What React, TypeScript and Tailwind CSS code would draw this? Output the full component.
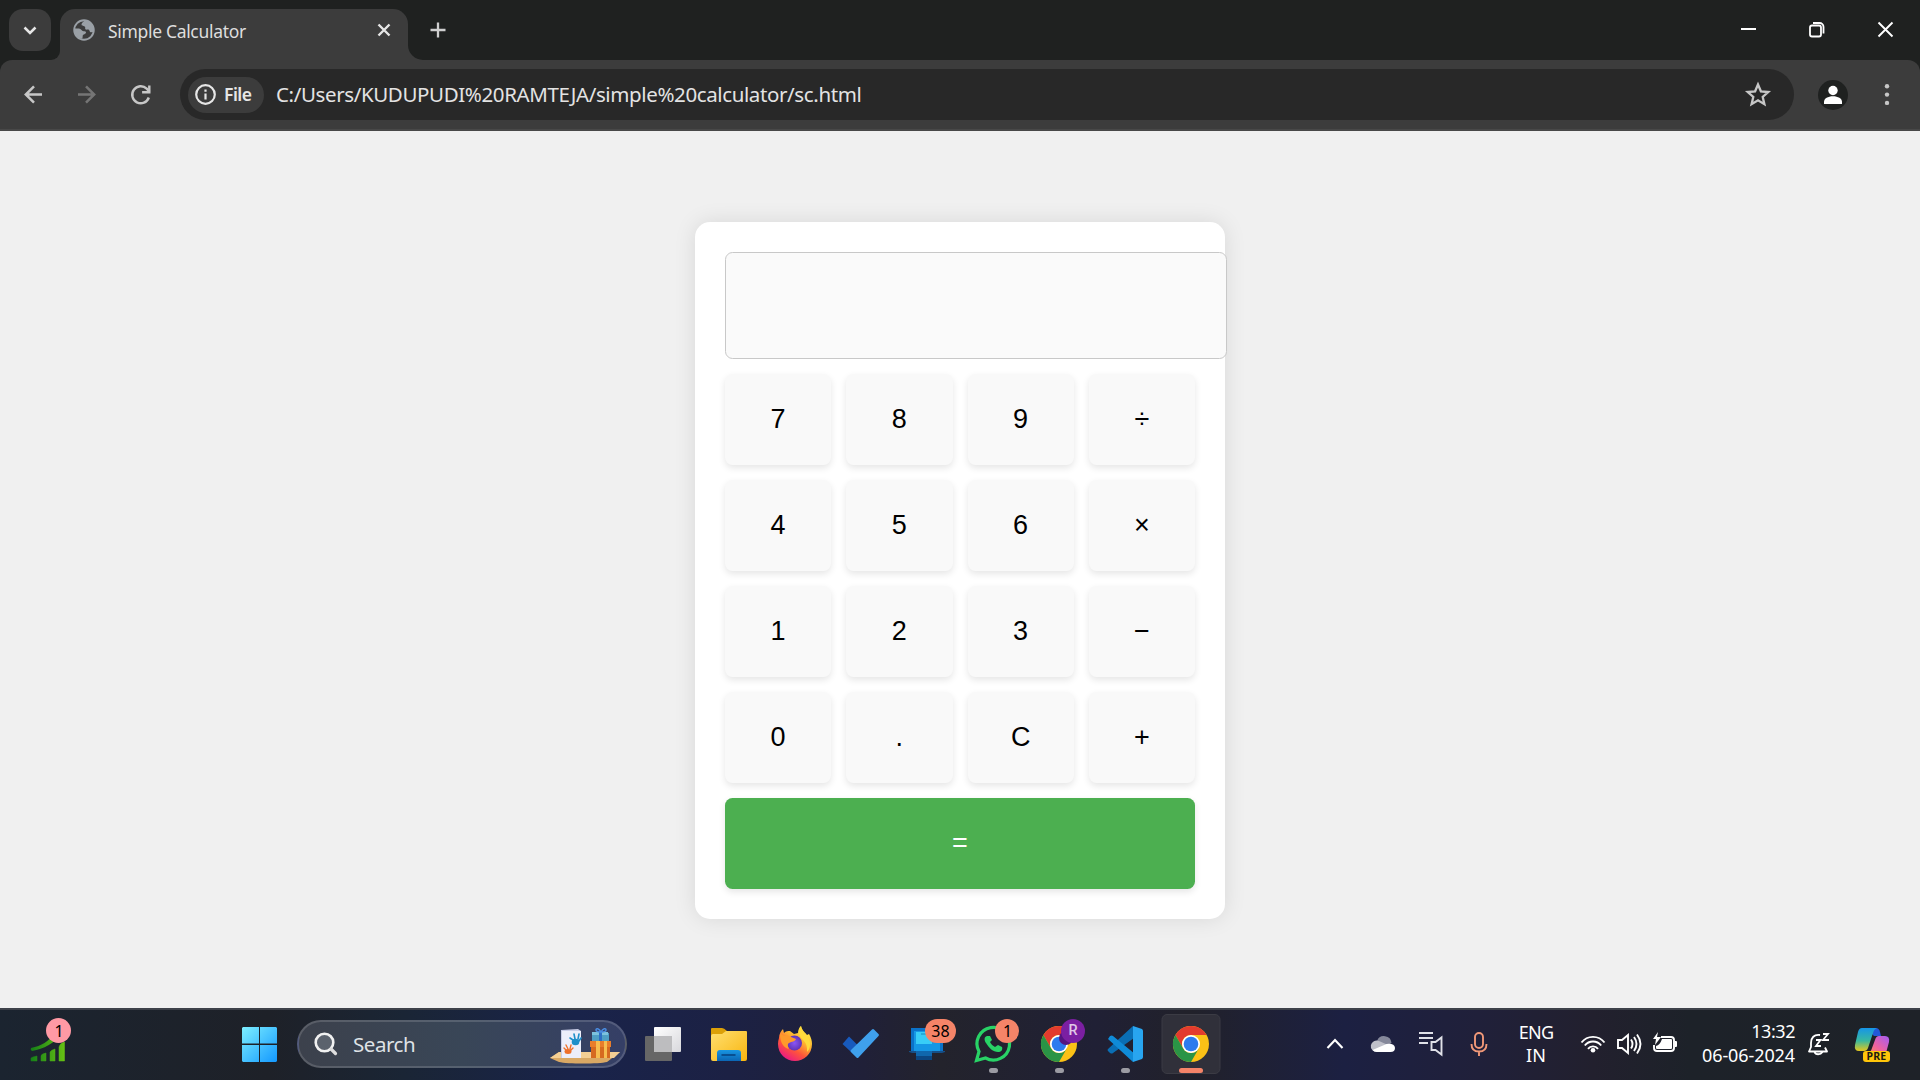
import type { ReactNode } from "react";

function Glyph({ x, y = 1008, w, h = 72, children }: { x: number; y?: number; w: number; h?: number; children: ReactNode }) {
  return (
    <svg className="block shrink-0" width={w} height={h} viewBox={`${x} ${y} ${w} ${h}`} fill="none">
      {children}
    </svg>
  );
}

function TabStrip() {
  return (
    <div className="flex h-[60px] items-start bg-[#1f2120]">
      <button className="mt-[9px] ml-[9px] h-[42px] w-[42px] rounded-[14px] bg-[#3c3c3c]">
        <Glyph x={9} y={9} w={42} h={42}>
          <path d="M24.5 27.5 30 33l5.5-5.5" stroke="#e6e6e6" strokeWidth="2.5" />
        </Glyph>
      </button>
      <div className="mt-[45px] h-[15px] w-[9px] bg-[#3c3c3c]">
        <div className="h-full w-full rounded-br-[15px] bg-[#1f2120]" />
      </div>
      <div className="mt-[9px] flex h-[51px] w-[348px] items-start rounded-t-[15px] bg-[#3c3c3c] pl-3">
        <Glyph x={72} y={9} w={24} h={42}>
          <circle cx="84" cy="30" r="9.800" stroke="#9aa0a6" strokeWidth="1.900" />
          <path d="M74.500 28.500h4.500c2 0 2.500 2.500 4.500 2.800 1.500.2 2.500-.2 2.500 1.200 0 1.700-3 1.600-3.300 3.300-.2 1.200.3 2.700-1.200 3C77.500 38.500 74 34 74.500 28.500Z" fill="#9aa0a6" />
          <path d="M85 20.500c-2 1.500-3.500 2.500-3.500 4 0 1.700 2.800 1.200 3.500 2.300.6 1-.4 2.200.8 2.700 1 .5 2-.4 3 .2 1.200.7.6 2.300 2 2.600l3-.3C94.500 25.500 90.500 20.500 85 20.500Z" fill="#9aa0a6" />
        </Glyph>
        <span className="ml-3 h-[42px] w-[262px] font-['Noto_Sans'] text-[17.500px] leading-[45px] tracking-[-0.320px] whitespace-nowrap text-[#dedede]">Simple Calculator</span>
        <Glyph x={370} y={9} w={28} h={42}>
          <path d="m378.500 24.500 11 11m0-11-11 11" stroke="#e6e6e6" strokeWidth="2.400" />
        </Glyph>
      </div>
      <div className="mt-[45px] h-[15px] w-[15px] bg-[#3c3c3c]">
        <div className="h-full w-full rounded-bl-[15px] bg-[#1f2120]" />
      </div>
      <Glyph x={423} y={0} w={30} h={60}>
        <path d="M430.500 30h15M438 22.500v15" stroke="#cfcfcf" strokeWidth="2.300" />
      </Glyph>
      <div className="flex-1" />
      <Glyph x={1720} y={0} w={200} h={60}>
        <path d="M1741 29h15" stroke="#fff" strokeWidth="2" />
        <rect x="1810" y="25.500" width="11" height="11" rx="2" stroke="#fff" strokeWidth="1.800" />
        <path d="M1813 23h6.500a4 4 0 0 1 4 4v6.500" stroke="#fff" strokeWidth="1.800" />
        <path d="m1878.500 22.500 14 14m0-14-14 14" stroke="#fff" strokeWidth="1.900" />
      </Glyph>
    </div>
  );
}

function Toolbar() {
  return (
    <div className="bg-[#1f2120]">
      <div className="flex h-[71px] items-start rounded-t-[12px] bg-[#3c3c3c] pt-[9px] shadow-[inset_0_-2px_0_#484848]">
        <Glyph x={0} y={69} w={180} h={51}>
          <path d="M42 94.500H26m8-8.200-8.200 8.200 8.200 8.200" stroke="#c7c7c7" strokeWidth="2.500" />
          <path d="M78 94.500h16m-8-8.200 8.200 8.200-8.200 8.200" stroke="#757575" strokeWidth="2.500" />
          <path d="M148.800 97.500a8.500 8.500 0 1 1-2.100-8.800l2.800 3" stroke="#c7c7c7" strokeWidth="2.400" />
          <path d="M149.300 85.500v6.800h-7.200" stroke="#c7c7c7" strokeWidth="2.400" />
        </Glyph>
        <div className="flex h-[51px] w-[1614px] items-center rounded-full bg-[#282828] pl-2">
          <div className="flex h-9 w-[76px] items-center rounded-full bg-[#3c3c3c] pl-[6px]">
            <Glyph x={194} y={83} w={24} h={24}>
              <circle cx="205.500" cy="94.500" r="9.300" stroke="#e6e6e6" strokeWidth="2.200" />
              <path d="M205.500 93.500v6M205.500 89.500v2.200" stroke="#e6e6e6" strokeWidth="2.200" />
            </Glyph>
            <span className="ml-[6px] font-['Noto_Sans'] text-[17.500px] font-semibold tracking-[-0.500px] text-[#e6e6e6]">File</span>
          </div>
          <span className="ml-3 flex-1 font-['Noto_Sans'] text-[20.500px] tracking-[-0.380px] whitespace-nowrap text-[#e3e3e3]">
            C:/Users/KUDUPUDI%20RAMTEJA/simple%20calculator/sc.html
          </span>
          <Glyph x={1740} y={69} w={54} h={51}>
            <path d="m1758 84.500 2.900 6.800 7.400.7-5.600 4.900 1.700 7.300-6.400-3.900-6.400 3.900 1.700-7.300-5.600-4.900 7.400-.7z" stroke="#c7c7c7" strokeWidth="2.300" />
          </Glyph>
        </div>
        <Glyph x={1794} y={69} w={126} h={51}>
          <circle cx="1833" cy="95" r="15" fill="#1f2120" />
          <circle cx="1833" cy="90.500" r="4.700" fill="#fff" />
          <path d="M1824 104v-2c0-3.500 4-5.700 9-5.700s9 2.200 9 5.700v2z" fill="#fff" />
          <circle cx="1887" cy="86.300" r="2.200" fill="#c7c7c7" />
          <circle cx="1887" cy="94.600" r="2.200" fill="#c7c7c7" />
          <circle cx="1887" cy="102.900" r="2.200" fill="#c7c7c7" />
        </Glyph>
      </div>
    </div>
  );
}

const keys = ["7", "8", "9", "÷", "4", "5", "6", "×", "1", "2", "3", "−", "0", ".", "C", "+"];

function Calculator() {
  return (
    <div className="h-[697px] w-[530px] rounded-[15px] bg-white p-[30px] font-['Liberation_Sans',sans-serif] text-[27px] text-black shadow-[0_0_22.500px_rgba(0,0,0,0.1)]">
      <div className="mb-[15px] h-[107px] w-[501.500px] rounded-[7.500px] border border-[#c8c8c8] bg-[#fafafa]" />
      <div className="grid grid-cols-4 gap-[15px]">
        {keys.map((k) => (
          <button key={k} className="h-[91px] rounded-[7.500px] bg-[#f9f9f9] pb-px shadow-[0_3px_7.500px_rgba(0,0,0,0.1)]">
            {k}
          </button>
        ))}
        <button className="col-span-4 h-[91px] rounded-[7.500px] bg-[#4caf50] pb-px text-white shadow-[0_3px_7.500px_rgba(0,0,0,0.1)]">=</button>
      </div>
    </div>
  );
}

function ChromeLogo({ cx, cy = 1044 }: { cx: number; cy?: number }) {
  return (
    <g transform={`translate(${cx} ${cy})`}>
      <circle r="18" fill="#fbc116" />
      <path d="M-15.600-9A18 18 0 0 1 15.600-9H0A9 9 0 0 0-7.800 4.500Z" fill="#e33b2e" />
      <path d="M-15.600-9A18 18 0 0 0 0 18L7.800 4.500A9 9 0 0 1-7.800 4.500Z" fill="#2a9446" />
      <circle r="9" fill="#fff" />
      <circle r="7.300" fill="#2d7bee" />
    </g>
  );
}

function Taskbar() {
  return (
    <div className="flex h-[72px] items-start border-t-2 border-[#3d4149] bg-[linear-gradient(90deg,#1b2430_0%,#1e2128_14%,#1a2535_21%,#19234a_30%,#1c2144_38%,#202038_45%,#23232c_49%,#202035_57%,#21212a_62%,#1c2042_70%,#20203a_77%,#22202e_83%,#1d2229_88%,#1e2228_100%)] font-['Noto_Sans']">
      <div className="relative h-[70px] w-[230px]">
        <Glyph x={0} y={1010} w={230} h={70}>
          <defs>
            <linearGradient id="grow" x1="31" x2="66" y1="0" y2="0" gradientUnits="userSpaceOnUse">
              <stop stopColor="#168018" />
              <stop offset="1" stopColor="#6ac413" />
            </linearGradient>
          </defs>
          <path d="M31 1048c11-2 17-7 24-14l6 1c-7 8-17 14-29 16q-2-1-1-3z" fill="url(#grow)" />
          <path d="M31 1061v-3l2-1 4-1v5zM41 1061v-5q0-2 5-3v8zM50 1061v-9q1-2 5-3v12zM59 1061v-14q1-4 5.500-5v19z" fill="url(#grow)" stroke="url(#grow)" strokeWidth=".5" />
        </Glyph>
        <div className="absolute top-[8px] left-[46px] flex h-[25px] w-[25px] items-center justify-center rounded-full bg-[#ff99a4] pl-px text-[16px] text-black">1</div>
      </div>
      <Glyph x={230} y={1010} w={67} h={70}>
        <defs>
          <linearGradient id="win" x1="242" x2="277" y1="1027" y2="1062" gradientUnits="userSpaceOnUse">
            <stop stopColor="#7defff" />
            <stop offset="1" stopColor="#1398ff" />
          </linearGradient>
        </defs>
        <path d="M243 1027h16v16.500h-17V1028zM260 1027h16l1 1v15.500h-17zM242 1045h17v17h-16l-1-1zM260 1045h17v16l-1 1h-16z" fill="url(#win)" />
      </Glyph>
      <div className="mt-[10px] flex h-12 w-[330px] items-center rounded-full border-2 border-white/15 bg-[#3b4455] bg-[linear-gradient(90deg,#3c414c,#394657_50%,#353f66)]">
        <Glyph x={299} y={1020} w={52} h={48}>
          <circle cx="324.500" cy="1042.500" r="8.800" fill="#5b626d" stroke="#f1f1f1" strokeWidth="2.600" />
          <path d="m331 1049 4.500 4.500" stroke="#dedede" strokeWidth="3.200" strokeLinecap="round" />
        </Glyph>
        <span className="ml-[2px] w-[192px] text-[20.500px] tracking-[-0.450px] text-[#dfe2e6]">Search</span>
        <Glyph x={546} y={1022} w={80} h={44}>
          <path d="m551 1058 9-6h61l-13 10c-8 2-40 2-48 0z" fill="#d9a864" />
          <path d="m551 1058 9-6h61l-6 6z" fill="#f4cf94" />
          <path d="m562 1030 17-1 3 2v27h-20z" fill="#c9cde6" />
          <path d="M563 1031h19v27h-19z" fill="#eceefa" />
          <path d="m571 1038 3 2m1-6 1 5m4-5-1 5m3-1-2 3" stroke="#1e8fc9" strokeWidth="1.600" strokeLinecap="round" />
          <ellipse cx="576.500" cy="1042" rx="3.800" ry="3.200" fill="#1e8fc9" />
          <path d="m565 1048 2 2m0-5 2 4m3-4-1 4m3-1-3 3" stroke="#ef702a" strokeWidth="1.400" strokeLinecap="round" />
          <ellipse cx="569" cy="1051.500" rx="3.500" ry="2.500" fill="#ef702a" />
          <path d="M593 1033h17v8h-17z" fill="#4f9fc4" />
          <path d="M593 1032h16v3h-16z" fill="#7cc2dd" />
          <path d="M600 1031h3v10h-3z" fill="#2d6fc5" />
          <path d="M602 1032c-2-4-5-4-5-2s3 2 5 2 5 0 5-2-3-2-5 2z" stroke="#498be0" strokeWidth="1.500" />
          <path d="M592 1043h19v15h-19z" fill="#d66a20" />
          <path d="M591 1041h21v6h-21z" fill="#e87d2b" />
          <path d="M597 1041h4v17h-4zM605 1041h3v17h-3z" fill="#f6bd50" />
        </Glyph>
      </div>
      <Glyph x={627} y={1010} w={69} h={70}>
        <defs>
          <linearGradient id="tv" x1="0" x2="1" y1="0" y2="1">
            <stop stopColor="#fff" />
            <stop offset="1" stopColor="#d8d8dc" />
          </linearGradient>
        </defs>
        <rect x="645" y="1036" width="27" height="25" rx="1" fill="#666" />
        <rect x="654" y="1027" width="27" height="25" rx="1" fill="url(#tv)" />
        <path d="M654 1036h18v16h-18z" fill="#bdbdbf" />
      </Glyph>
      <Glyph x={696} y={1010} w={66} h={70}>
        <defs>
          <linearGradient id="folder" x1="0" x2="1" y1="0" y2="1">
            <stop stopColor="#ffdf70" />
            <stop offset="1" stopColor="#f9b50e" />
          </linearGradient>
          <linearGradient id="clip" x1="0" x2="0" y1="0" y2="1">
            <stop stopColor="#1896e2" />
            <stop offset="1" stopColor="#0b65b4" />
          </linearGradient>
        </defs>
        <path d="M711 1029q0-1 1-1h10q2 0 5 3h5v10h-21z" fill="#dca008" />
        <path d="M711 1036q0-2 2-2h9l4-3h20q1 0 1 1v27q0 2-2 2h-32q-2 0-2-2z" fill="url(#folder)" />
        <path d="M717 1061v-8q0-3 3-3h18q3 0 3 3v8z" fill="url(#clip)" />
        <path d="M721.500 1055h14" stroke="#084f91" strokeWidth="2" />
      </Glyph>
      <Glyph x={762} y={1010} w={66} h={70}>
        <defs>
          <linearGradient id="fox" x1="806" x2="785" y1="1028" y2="1060" gradientUnits="userSpaceOnUse">
            <stop stopColor="#fff14a" />
            <stop offset=".35" stopColor="#ffb52e" />
            <stop offset=".65" stopColor="#ff553a" />
            <stop offset="1" stopColor="#e8138c" />
          </linearGradient>
          <radialGradient id="foxGlobe">
            <stop stopColor="#8a55f5" />
            <stop offset="1" stopColor="#6034b5" />
          </radialGradient>
        </defs>
        <path d="M779 1038c0-4 2-7 4-9l1 4c2-2 4-2 6-2l4 3 4-1c0-3 1-5 3-7 1 5 4 6 6 9l2-1c2 3 3 7 3 10 0 10-8 17-17 17s-17-7-17-17q0-3 1-6z" fill="url(#fox)" />
        <circle cx="794.500" cy="1043" r="7.500" fill="url(#foxGlobe)" />
        <path d="M780 1034c2 0 3 1 4 2 3-1 5 0 7 1l5 2c-1 3-4 2-7 4-2 1-1 4 0 6-5-1-9-6-9-15z" fill="#ff9a2b" />
        <path d="M801 1026c1 5 4 7 7 11 3 5 3 11-1 15 1-10-5-12-7-16-2-4-1-8 1-10z" fill="#ffda3c" />
      </Glyph>
      <Glyph x={828} y={1010} w={66} h={70}>
        <path d="m842.500 1044 6.500-7.500 14 14-6 7z" fill="#185abd" />
        <path d="M872 1029.500q1-1 2 0l4.500 4.500q1 1 0 2l-20 21.500q-1 1-2 0l-5.500-5.500q-1-1 0-2z" fill="#3fa0ec" />
      </Glyph>
      <div className="relative h-[70px] w-[66px]">
        <Glyph x={894} y={1010} w={66} h={70}>
          <path d="M911 1028h32v23h-32z" fill="#0b72c8" />
          <path d="M914 1031h26v20h-26z" fill="#1597e5" />
          <path d="M909 1051h36v1l-3 1h-30l-3-1z" fill="#164f87" />
          <path d="M916 1032h16v28h-16z" fill="#1597e5" />
          <path d="M916 1032h16v12h-16z" fill="#38cdf7" />
          <path d="M916 1051h16v5h-16z" fill="#1067ad" />
          <path d="M916 1056h16v4h-16z" fill="#0b4682" />
          <path d="M921 1034h8" stroke="#168ac0" />
        </Glyph>
        <div className="absolute top-[9px] left-[31px] flex h-6 w-[31px] items-center justify-center rounded-full bg-[#f58468] text-[16px] text-black">38</div>
      </div>
      <div className="relative h-[70px] w-[66px]">
        <Glyph x={960} y={1010} w={66} h={70}>
          <path d="m976.500 1060.500 2.500-9a16.300 16.300 0 1 1 6.500 6.500z" stroke="#28d366" strokeWidth="3.200" />
          <path d="M987 1036c-3 1-3 4-1 7 3 5 7 9 12 9 3 0 5-2 4-5l-4-2-3 2c-2-1-4-3-5-5l2-2-2-4z" fill="#28d366" />
          <rect x="989" y="1068" width="9" height="5" rx="2.500" fill="#9b9ba3" />
        </Glyph>
        <div className="absolute top-[9px] left-[35px] flex h-6 w-6 items-center justify-center rounded-full bg-[#f58468] pl-px text-[16px] text-black">1</div>
      </div>
      <div className="relative h-[70px] w-[66px]">
        <Glyph x={1026} y={1010} w={66} h={70}>
          <ChromeLogo cx={1059} />
          <circle cx="1066" cy="1038" r="7" fill="#541580" />
          <rect x="1055" y="1068" width="9" height="5" rx="2.500" fill="#9b9ba3" />
        </Glyph>
        <div className="absolute top-[9px] left-[35px] flex h-6 w-6 items-center justify-center rounded-full bg-[#7b1fa2] font-['Roboto'] text-[14.500px] font-medium text-[#e0c8e8]">R</div>
      </div>
      <Glyph x={1092} y={1010} w={66} h={70}>
        <path d="m1108 1049 25-23 1 12-21 15q-1 1-3 0l-2-2q-1-1 0-2z" fill="#0a6eb4" />
        <path d="m1108 1039 2-3q2-1 3 0l22 18-2 8z" fill="#0f8bd8" />
        <path d="m1133 1026 9 3q1 1 1 2v26q0 1-1 2l-9 3z" fill="#28a5f0" />
        <rect x="1121" y="1068" width="9" height="5" rx="2.500" fill="#9b9ba3" />
      </Glyph>
      <Glyph x={1158} y={1010} w={66} h={70}>
        <rect x="1162" y="1014.500" width="58" height="59" rx="5" fill="#30303a" stroke="#3b3b44" />
        <ChromeLogo cx={1191} />
        <rect x="1179" y="1068" width="24" height="5" rx="2.500" fill="#f58468" />
      </Glyph>
      <div className="flex-1" />
      <Glyph x={1310} y={1010} w={190} h={70}>
        <path d="m1327.500 1048 7.500-8 7.500 8" stroke="#fff" strokeWidth="2.100" />
        <path d="M1377 1041a7.500 7.500 0 0 1 14.500 2l-8 5z" fill="#85889a" />
        <path d="M1377 1052a6 5.700 0 1 1 2-11l9 4-6 7z" fill="#bfc0ca" />
        <path d="m1372.500 1050 14-6q8-1 8.500 4 0 4-4.500 4h-13.500q-3 0-4.500-2z" fill="#fff" />
        <path d="M1419 1033h14M1419 1038h14M1419 1043h9" stroke="#e0e1e8" strokeWidth="2" />
        <path d="M1431.500 1042h4l6-4.500v17l-6-4.500h-4z" stroke="#e0e1e8" strokeWidth="1.900" />
        <rect x="1475" y="1033" width="8" height="15" rx="4" stroke="#f09878" strokeWidth="1.900" />
        <path d="M1471.500 1044c0 5 3 7.500 7.500 7.500s7.500-2.500 7.500-7.500M1479 1051.500v4.500" stroke="#f09878" strokeWidth="1.900" />
      </Glyph>
      <div className="mt-[11px] flex w-[72px] flex-col items-center text-[18px] leading-[23px] text-white">
        <span className="tracking-[-0.700px]">ENG</span>
        <span>IN</span>
      </div>
      <Glyph x={1572} y={1010} w={112} h={70}>
        <g stroke="#fff" strokeWidth="1.900">
          <path d="M1581.500 1042.500a14.500 14.500 0 0 1 23 0" />
          <path d="M1584.800 1045.500a10.500 10.500 0 0 1 16.400 0M1588 1048.800a6.300 6.300 0 0 1 10 0" />
          <path d="M1618 1040h4l6-5v18l-6-5h-4zM1631 1039.500q3 4.500 0 9M1634 1037q5 7 0 14M1637 1034.500q7 9.500 0 19" />
          <path d="M1661 1037h10q3 0 3 3v8q0 3-3 3h-14q-3 0-3-3v-3" />
        </g>
        <circle cx="1593" cy="1050.300" r="2.300" fill="#fff" />
        <path d="M1662 1039h9q1 0 1 1v8q0 1-1 1h-14q-1 0-1-1v-2q4-1 6-7zM1675 1041h1q1 0 1 1v4q0 1-1 1h-1zM1658 1032l-5 7h3l-1 6 6-8h-4z" fill="#fff" />
      </Glyph>
      <div className="mt-[9px] flex w-[111px] flex-col items-end text-[18px] leading-6 text-white">
        <span className="tracking-[-0.450px]">13:32</span>
        <span className="tracking-[-0.100px]">06-06-2024</span>
      </div>
      <Glyph x={1795} y={1010} w={54} h={70}>
        <path d="M1820 1035c-6-1-9 3-9 8v4l-2 4.500h18l-2-4M1814.500 1052c1 3 6 3 8 0" stroke="#fff" strokeWidth="1.800" strokeLinejoin="round" />
        <path d="M1823 1034h5l-5 6h6M1816 1040h4.500l-4.500 6h5" stroke="#fff" strokeWidth="1.800" />
      </Glyph>
      <div className="relative h-[70px] w-[71px]">
        <Glyph x={1849} y={1010} w={71} h={70}>
          <defs>
            <linearGradient id="coA" x1="0" x2="0" y1="0" y2="1">
              <stop stopColor="#1695e8" />
              <stop offset=".55" stopColor="#38b8a0" />
              <stop offset="1" stopColor="#e5c71c" />
            </linearGradient>
            <linearGradient id="coB" x1="1" x2="0" y1="0" y2="1">
              <stop stopColor="#a45cf4" />
              <stop offset=".6" stopColor="#ee62a0" />
              <stop offset="1" stopColor="#ff8856" />
            </linearGradient>
          </defs>
          <path d="M1866 1028h10q3 0 4 4l1 4h-7z" fill="#2259d8" />
          <path d="M1862 1028h15q-3 1-4 5l-5 15q-1 3-4 3h-5q-5 0-4-6l3-13q1-4 4-4z" fill="url(#coA)" />
          <path d="M1879 1036h6q5 0 4 6l-3 11h-18q3-1 4-5l3-8q1-4 4-4z" fill="url(#coB)" />
        </Glyph>
        <div className="absolute top-[41px] left-[14px] flex h-[11px] w-[27px] items-center justify-center rounded-[3px] bg-[#ffc60a] text-[10.500px] font-bold tracking-[0.200px] text-[#1e1b10]">PRE</div>
      </div>
    </div>
  );
}

export default function App() {
  return (
    <div className="flex h-[1080px] w-[1920px] flex-col overflow-hidden">
      <TabStrip />
      <Toolbar />
      <main className="flex flex-1 items-start justify-center bg-[#f0f0f0] pt-[91px]">
        <Calculator />
      </main>
      <Taskbar />
    </div>
  );
}
